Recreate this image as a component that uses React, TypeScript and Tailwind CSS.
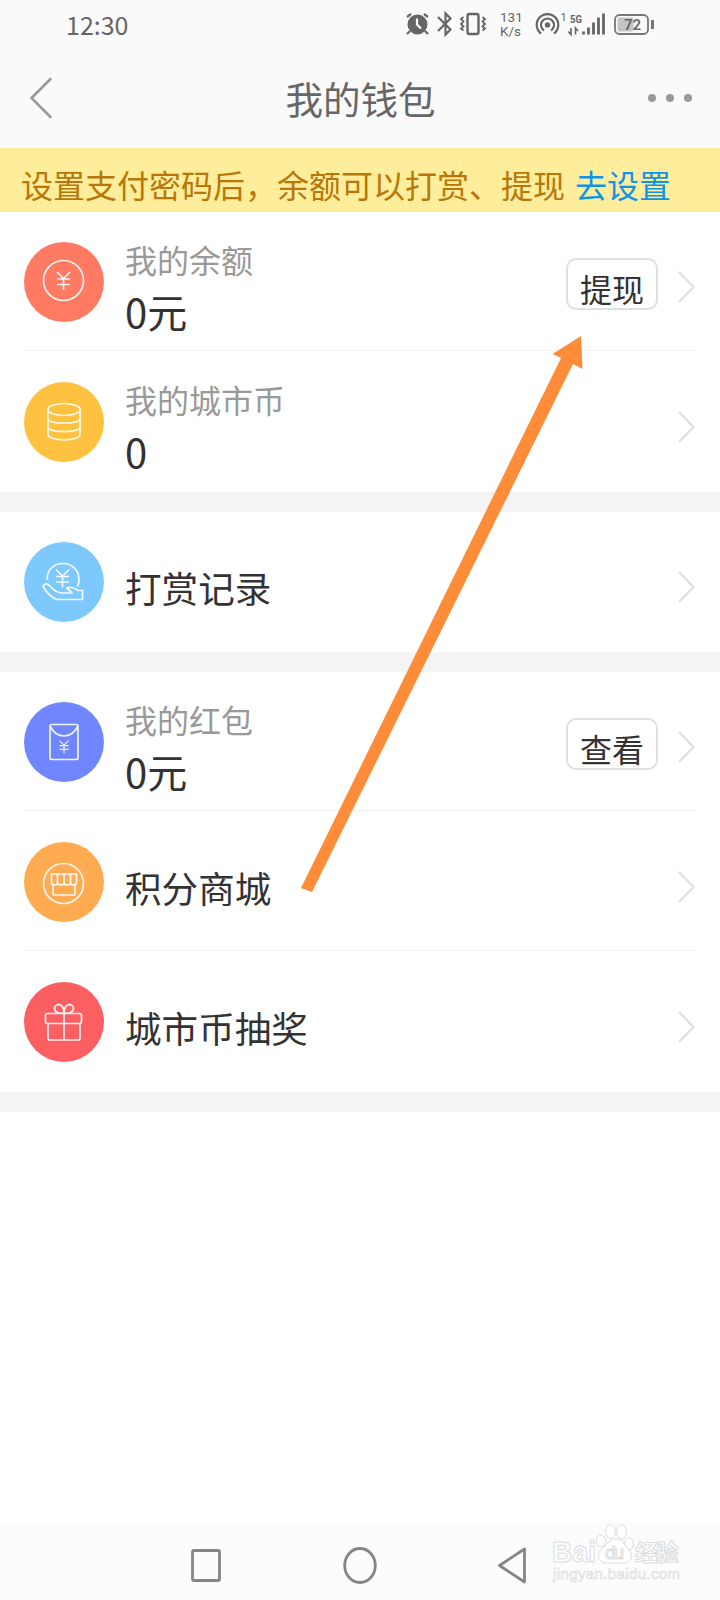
import type { ReactNode } from "react";

const FONT = "font-['Noto_Sans_CJK_SC',sans-serif]";

function Chevron() {
  return (
    <svg width="18" height="34" viewBox="0 0 18 34" fill="none" className="shrink-0">
      <path d="M1 2l14.5 15L1 32" stroke="#dedede" strokeWidth="2" />
    </svg>
  );
}

function Yen({ x, y, s = 1 }: { x: number; y: number; s?: number }) {
  return (
    <g transform={`translate(${x} ${y}) scale(${s})`}>
      <path d="M-6.5 -9L0 -2.5L6.5 -9M0 -2.5V9M-6.5 -2H6.5M-6.5 3.5H6.5" />
    </g>
  );
}

type RowProps = {
  color: string;
  icon: ReactNode;
  label?: string;
  value: string;
  action?: string;
  divider?: boolean;
};

function Row({ color, icon, label, value, action, divider }: RowProps) {
  return (
    <div className="h-[140px] bg-white px-6 pb-px">
      <div className={`flex h-full border-b ${divider ? "border-[#f2f2f2]" : "border-transparent"}`}>
        <div className={`mt-[30px] size-20 shrink-0 rounded-full ${color}`}>
          <svg width="80" height="80" viewBox="0 0 80 80" fill="none" stroke="#fff" strokeWidth="1.7" strokeOpacity="0.9">
            {icon}
          </svg>
        </div>
        {label ? (
          <div className="ml-[21px] flex-1 pt-[23px]">
            <p className="text-[32px] leading-[48px] text-[#999]">{label}</p>
            <p className="text-[40px] leading-[56px] text-[#333]">{value}</p>
          </div>
        ) : (
          <p className="ml-[21px] flex-1 pt-[48px] text-[36.6px] leading-[56px] text-[#333]">{value}</p>
        )}
        {action && (
          <button className="mt-[46px] mr-5 h-[52px] w-[92px] rounded-[10px] border-2 border-[#e0e0e0] pt-1 text-[32px] leading-[48px] text-[#333]">
            {action}
          </button>
        )}
        <div className="mt-[58px]">
          <Chevron />
        </div>
      </div>
    </div>
  );
}

function StatusBar() {
  return (
    <div className="flex h-12 items-center pl-[66px] text-[#666]">
      <span className="text-[25px] leading-none">12:30</span>
      <svg width="265" height="48" viewBox="400 0 265 48" fill="none" className="ml-[271px]">
        <g stroke="#666">
          {/* alarm */}
          <circle cx="418.5" cy="24.5" r="10" fill="#666" stroke="none" />
          <path d="M418 18.500v6l4 4" stroke="#fafafa" strokeWidth="2.200" />
          <path d="M408 17l4-3M429 17l-4-3M411 31l-3 3M426 31l3 3" strokeWidth="2.200" />
          {/* bluetooth */}
          <path d="M439 17l12.500 12.500-5 5v-21l5 5L439 31" strokeWidth="2.200" />
          {/* vibrate */}
          <rect x="468.500" y="14" width="11" height="20" rx="2" strokeWidth="2.400" />
          <path d="M464.500 17l-2.500 2 2.500 2.500-2.500 2.500 2.500 2.500-2.500 2 2.500 2M483.500 17l2.500 2-2.500 2.500 2.500 2.500-2.500 2.500 2.500 2-2.500 2" strokeWidth="1.800" />
          {/* hotspot */}
          <circle cx="548.500" cy="25" r="2.700" fill="#666" stroke="none" />
          <path d="M545 30.500a6.500 6.500 0 1 1 7 0M542 33.500a10.800 10.800 0 1 1 13 0" strokeWidth="2.200" />
          {/* signal */}
          <path d="M584.500 34.500v-3M589.500 34.500v-7M594.500 34.500v-12M599.500 34.500v-17M604.500 34.500v-21" strokeWidth="2.800" />
          <path d="M572 28v6.500l-2.500-3M576.500 34.500V28l2.500 3" strokeWidth="1.600" />
          {/* battery */}
          <rect x="616" y="15" width="33" height="19" rx="4.500" strokeWidth="1.800" stroke="#777" />
          <rect x="618.500" y="17.500" width="16" height="14" rx="2" fill="#c4c4c4" stroke="none" />
          <path d="M653.500 20v9" strokeWidth="3" stroke="#777" />
        </g>
        <g fill="#666" className="font-[Roboto,sans-serif]">
          <text x="501" y="22" fontSize="13.500">131</text>
          <text x="501" y="36" fontSize="13.500">K/s</text>
          <text x="561.500" y="21" fontSize="11">1</text>
          <text x="571" y="22.500" fontSize="11.500" fontWeight="700" textLength="12" lengthAdjust="spacingAndGlyphs">5G</text>
          <text x="625" y="30" fontSize="15" fontWeight="600">72</text>
        </g>
      </svg>
    </div>
  );
}

function Watermark() {
  return (
    <svg width="150" height="70" viewBox="545 1518 150 70" className="absolute bottom-3 left-[545px]" fill="#fff" stroke="#dcdcdc" strokeWidth="1">
      <g className="font-['Liberation_Sans','Noto_Sans_CJK_SC',sans-serif]" fontWeight="700">
        <text x="552" y="1562" fontSize="29" textLength="44" lengthAdjust="spacingAndGlyphs">Bai</text>
        <ellipse cx="601" cy="1541" rx="4.800" ry="6" />
        <ellipse cx="610.500" cy="1531.500" rx="4.800" ry="7" />
        <ellipse cx="621.500" cy="1532" rx="4.800" ry="7" />
        <ellipse cx="629" cy="1544" rx="4.500" ry="6" />
        <path d="M607 1544c5-7 12-7 17 0l6 7c4 7-1 13-8 12h-14c-8 1-12-6-8-12z" />
        <text x="605" y="1559" fontSize="19" fontWeight="400" textLength="19">du</text>
        <text x="635" y="1561" fontSize="23" textLength="44">经验</text>
        <text x="553" y="1579" fontSize="15" fontWeight="400" strokeWidth="0.700" textLength="127">jingyan.baidu.com</text>
      </g>
    </svg>
  );
}

export default function App() {
  return (
    <div className={`relative flex h-[1600px] w-[720px] flex-col overflow-hidden bg-white ${FONT}`}>
      <header className="h-[148px] bg-[#fafafa]">
        <StatusBar />
        <div className="flex h-[100px] items-center justify-between pr-[28px] pl-[29px]">
          <svg width="44" height="42" viewBox="0 0 44 42" fill="none">
            <path d="M21.500 2L2.500 21l19 19" stroke="#999" strokeWidth="2.500" strokeLinecap="round" />
          </svg>
          <h1 className="text-[37.500px] leading-none text-[#666]">我的钱包</h1>
          <div className="flex gap-[10px]">
            <span className="size-2 rounded-full bg-[#999]" />
            <span className="size-2 rounded-full bg-[#999]" />
            <span className="size-2 rounded-full bg-[#999]" />
          </div>
        </div>
      </header>

      <div className="flex h-16 items-center bg-[#feee9c] pt-2 pl-[21px] text-[32px] leading-none whitespace-nowrap text-[#b87708]">
        设置支付密码后，余额可以打赏、提现
        <a className="ml-[10px] text-[#0f95e8]">去设置</a>
      </div>

      <main className="flex flex-1 flex-col">
        <Row
          color="bg-[#ff7a63]"
          label="我的余额"
          value="0元"
          action="提现"
          divider
          icon={
            <>
              <circle cx="39.500" cy="38.500" r="20" />
              <Yen x={39.500} y={39} />
            </>
          }
        />
        <Row
          color="bg-[#ffc240]"
          label="我的城市币"
          value="0"
          icon={
            <>
              <ellipse cx="40" cy="27.500" rx="16" ry="6" />
              <path d="M24 27.500V52c0 3.500 7 6 16 6s16-2.500 16-6V27.500M24 36c0 3.500 7 5 16 5s16-1.500 16-5M24 44.500c0 3.500 7 5 16 5s16-1.500 16-5" />
            </>
          }
        />
        <div className="h-5 bg-[#f4f4f4]" />
        <Row
          color="bg-[#7dc8fd]"
          value="打赏记录"
          icon={
            <>
              <path d="M23.500 38C22 28 30 21.500 39 21.500c9.500 0 16 7 16 16 0 3-.5 5-1.500 7" />
              <Yen x={38.500} y={36.500} />
              <path d="M20 43c2-2 4-1 6 1 4 5 8 7 13 7h9c-1-2-4-3-5-5 3-1.500 8 0 11 2.500h4.500v9H33c-6-2-11-8-14-13z" />
            </>
          }
        />
        <div className="h-5 bg-[#f4f4f4]" />
        <Row
          color="bg-[#7086ff]"
          label="我的红包"
          value="0元"
          action="查看"
          divider
          icon={
            <>
              <rect x="26" y="22.500" width="28" height="35" rx="2" />
              <path d="M26 24c3 6 8 10 14 10s11-4 14-10" />
              <Yen x={40} y={45} s={0.700} />
            </>
          }
        />
        <Row
          color="bg-[#ffab52]"
          value="积分商城"
          divider
          icon={
            <>
              <circle cx="39.500" cy="41.500" r="20" />
              <path d="M27.500 32h25v8c0 2-1.500 3-3 3s-3-1-3-3c0 2-1.500 3-3.300 3s-3.200-1-3.200-3c0 2-1.500 3-3.300 3s-3.200-1-3.200-3c0 2-1.500 3-3 3s-3-1-3-3zM33.500 32v8M40 32v8M46.500 32v8M29 43v8c0 1.500 1 2 2 2h18c1.500 0 2-1 2-2v-8" />
            </>
          }
        />
        <Row
          color="bg-[#fb5f62]"
          value="城市币抽奖"
          icon={
            <>
              <rect x="21.500" y="31.500" width="36" height="10" rx="2" />
              <path d="M24 41.500V56c0 1.500 1 2 2 2h28c1.500 0 2-1 2-2V41.500M40 31.500V58" />
              <path d="M40 31.500c-5 0-9.500-1.500-9.500-5 0-5.500 9.500-6.500 9.500 5 0-11.500 9.500-10.500 9.500-5 0 3.500-4.500 5-9.500 5z" />
            </>
          }
        />
        <div className="h-5 bg-[#f4f4f4]" />
      </main>

      <nav className="h-[78px] shrink-0 bg-[#fcfcfc]">
        <svg width="720" height="78" viewBox="0 1522 720 78" fill="none" stroke="#858585" strokeWidth="2.800">
          <rect x="192.500" y="1550.500" width="27" height="30" rx="1.500" />
          <ellipse cx="360" cy="1565.500" rx="15.300" ry="17" />
          <path d="M499.500 1565.500L524.500 1549V1582z" strokeLinejoin="round" />
        </svg>
      </nav>
      <Watermark />

      {/* pointer from the list to the withdraw button */}
      <svg width="720" height="1600" viewBox="0 0 720 1600" className="pointer-events-none absolute inset-0">
        <path d="M301 888L561 358L552.500 354L581 336L582.500 369L573 364L312 892z" fill="#ff8c38" />
      </svg>
    </div>
  );
}
